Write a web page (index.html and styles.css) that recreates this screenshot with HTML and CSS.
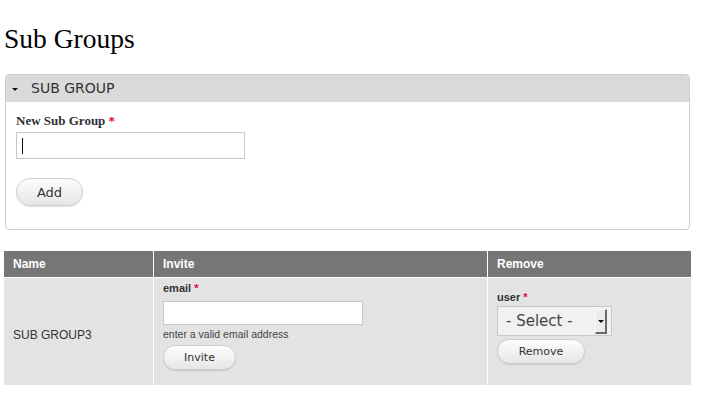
FILE: index.html
```html
<!DOCTYPE html>
<html lang="en">
<head>
<meta charset="utf-8">
<title>Sub Groups</title>
<link rel="stylesheet" href="styles.css">
</head>
<body>
<h1 class="page-title">Sub Groups</h1>

<div class="panel">
  <div class="panel-head">
    <span class="caret"></span>
    <span class="panel-title">SUB GROUP</span>
  </div>
  <div class="panel-body">
    <label class="serif-label">New Sub Group <span class="req">*</span></label>
    <div class="text-input wide"><span class="cursor"></span></div>
    <button class="pill btn-add">Add</button>
  </div>
</div>

<table class="groups">
  <colgroup>
    <col class="c-name">
    <col class="c-invite">
    <col class="c-remove">
  </colgroup>
  <thead>
    <tr><th>Name</th><th>Invite</th><th class="last">Remove</th></tr>
  </thead>
  <tbody>
    <tr>
      <td class="name">SUB GROUP3</td>
      <td class="invite">
        <div class="small-label">email <span class="req">*</span></div>
        <div class="text-input email"></div>
        <div class="desc">enter a valid email address</div>
        <button class="pill btn-invite">Invite</button>
      </td>
      <td class="remove last">
        <div class="small-label">user <span class="req">*</span></div>
        <div class="fake-select">
          <span class="sel-text">- Select -</span>
          <span class="sel-arrow"><span class="tri"></span></span>
        </div>
        <button class="pill btn-remove">Remove</button>
      </td>
    </tr>
  </tbody>
</table>
</body>
</html>
```

FILE: styles.css
```css
html, body {
  margin: 0;
  padding: 0;
  background: #fff;
}
body {
  padding: 0 12px 0 4px;
  font-family: "Liberation Sans", Arial, sans-serif;
  color: #333;
}
.page-title {
  font-family: "Liberation Serif", "Times New Roman", serif;
  font-weight: normal;
  font-size: 27.5px;
  line-height: 32px;
  margin: 23px 0 19px 0;
  color: #000;
}
.panel {
  margin: 0 1px;
  border: 1px solid #cdcdcd;
  border-radius: 4px;
  overflow: hidden;
}
.panel-head {
  background: #dadada;
  height: 27px;
  display: flex;
  align-items: center;
  padding-left: 6px;
}
.caret {
  width: 0;
  height: 0;
  border-left: 3px solid transparent;
  border-right: 3px solid transparent;
  border-top: 3px solid #111;
  margin-right: 13px;
  margin-top: 1px;
}
.panel-title {
  font-family: "DejaVu Sans", sans-serif;
  font-size: 14px;
  color: #333;
  line-height: 26px;
  padding-bottom: 1px;
}
.panel-body {
  padding: 11px 10px 23px 10px;
  display: flex;
  flex-direction: column;
  align-items: flex-start;
}
.serif-label {
  font-family: "Liberation Serif", "Times New Roman", serif;
  font-weight: bold;
  font-size: 13px;
  line-height: 15px;
  color: #2f2f3a;
}
.req {
  color: #e2003a;
}
.text-input {
  box-sizing: border-box;
  background: #fff;
  border: 1px solid #c8c8c8;
}
.text-input.wide {
  width: 229px;
  height: 27px;
  margin-top: 4px;
  padding: 5px 0 0 5px;
}
.cursor {
  display: block;
  width: 1px;
  height: 16px;
  background: #111;
}
.pill {
  box-sizing: border-box;
  border: 1px solid #cfcfcf;
  border-radius: 14px;
  background: linear-gradient(#fdfdfd, #e6e6e6);
  box-shadow: 0 1px 1px rgba(0, 0, 0, 0.12);
  font-family: "DejaVu Sans", sans-serif;
  color: #333;
  padding: 0;
  cursor: pointer;
}
.btn-add {
  width: 67px;
  height: 28px;
  margin-top: 19px;
  font-size: 13px;
}
.groups {
  width: 687px;
  border-collapse: separate;
  border-spacing: 0;
  table-layout: fixed;
  margin-top: 21px;
}
.c-name { width: 150px; }
.c-invite { width: 334px; }
.c-remove { width: 203px; }
.groups th {
  background: #767676;
  color: #fff;
  font-family: "Liberation Sans", Arial, sans-serif;
  font-weight: bold;
  font-size: 12px;
  text-align: left;
  height: 27px;
  padding: 0 9px;
  border-right: 1px solid #fff;
  border-bottom: 1px solid #fff;
  box-sizing: border-box;
}
.groups td {
  background: #e3e3e3;
  border-right: 1px solid #fff;
  padding: 0 9px;
  font-size: 12px;
  color: #333;
}
.groups th.last, .groups td.last {
  border-right: 0;
}
.groups td.name {
  vertical-align: middle;
  padding-top: 7px;
}
.groups td.invite {
  vertical-align: top;
  padding-top: 3px;
  padding-bottom: 15px;
}
.groups td.remove {
  vertical-align: top;
  padding-top: 12px;
}
.small-label {
  font-weight: bold;
  font-size: 11px;
  line-height: 14px;
  color: #333;
}
.text-input.email {
  width: 200px;
  height: 24px;
  margin-top: 6px;
}
.desc {
  font-size: 10.5px;
  line-height: 13px;
  margin-top: 3px;
  color: #444;
}
.btn-invite {
  display: block;
  width: 73px;
  height: 25px;
  margin-top: 4px;
  font-size: 11px;
}
.fake-select {
  box-sizing: border-box;
  width: 115px;
  height: 30px;
  margin-top: 2px;
  border: 1px solid #c8c8c8;
  background: #f1f1f1;
  display: flex;
  align-items: center;
  padding: 0 4px 0 8px;
}
.sel-text {
  flex: 1;
  font-family: "DejaVu Sans", sans-serif;
  font-size: 15px;
  color: #444;
}
.sel-arrow {
  box-sizing: border-box;
  width: 12px;
  height: 25px;
  background: #ececec;
  border-right: 2px solid #6a6a6a;
  border-bottom: 2px solid #6a6a6a;
  border-top: 1px solid #fafafa;
  border-left: 1px solid #fafafa;
  display: flex;
  align-items: center;
  justify-content: center;
  margin-top: 1px;
}
.tri {
  width: 0;
  height: 0;
  border-left: 3px solid transparent;
  border-right: 3px solid transparent;
  border-top: 3px solid #111;
}
.btn-remove {
  display: block;
  width: 88px;
  height: 25px;
  margin-top: 3px;
  font-size: 11px;
}
```
